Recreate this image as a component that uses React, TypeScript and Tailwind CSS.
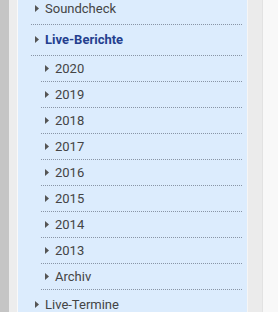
const years = ["2020", "2019", "2018", "2017", "2016", "2015", "2014", "2013", "Archiv"];

function Arrow() {
  return (
    <svg width="4" height="7" viewBox="0 0 4 7" className="shrink-0">
      <path d="M0 0 L4 3.5 L0 7 Z" fill="#555" />
    </svg>
  );
}

function Row({ label, active, sub }: { label: string; active?: boolean; sub?: boolean }) {
  return (
    <div
      className={`flex items-center gap-[6px] border-b border-dotted border-[#8995a6] pl-[4px] leading-[15px] ${
        sub ? "pt-[5px] pb-[5px]" : "pt-[7px] pb-[8px]"
      }`}
    >
      <Arrow />
      <span className={active ? "font-bold text-[#243f8e]" : "text-[#444]"}>{label}</span>
    </div>
  );
}

export default function App() {
  return (
    <div className="flex h-[312px] w-[278px] overflow-hidden font-['Roboto',sans-serif] text-[13px]">
      <div className="w-[9px] bg-[#c5c5c5]" />
      <div className="w-[8px] bg-[#ededed]" />
      <div className="w-px bg-[#f9f9f9]" />
      <div className="w-[229px] bg-[#dcecfd] pl-[13px] pr-[5px]">
        <ul className="-mt-[6px]">
          <li>
            <Row label="Soundcheck" />
          </li>
          <li>
            <Row label="Live-Berichte" active />
            <ul className="ml-[10px]">
              {years.map((y) => (
                <li key={y}>
                  <Row label={y} sub />
                </li>
              ))}
            </ul>
          </li>
          <li>
            <Row label="Live-Termine" />
          </li>
        </ul>
      </div>
      <div className="w-px bg-[#f5f5f5]" />
      <div className="w-[14px] bg-[#ebebeb]" />
      <div className="w-px bg-[#e2e2e2]" />
      <div className="flex-1 bg-[#f8f8f8]" />
    </div>
  );
}
